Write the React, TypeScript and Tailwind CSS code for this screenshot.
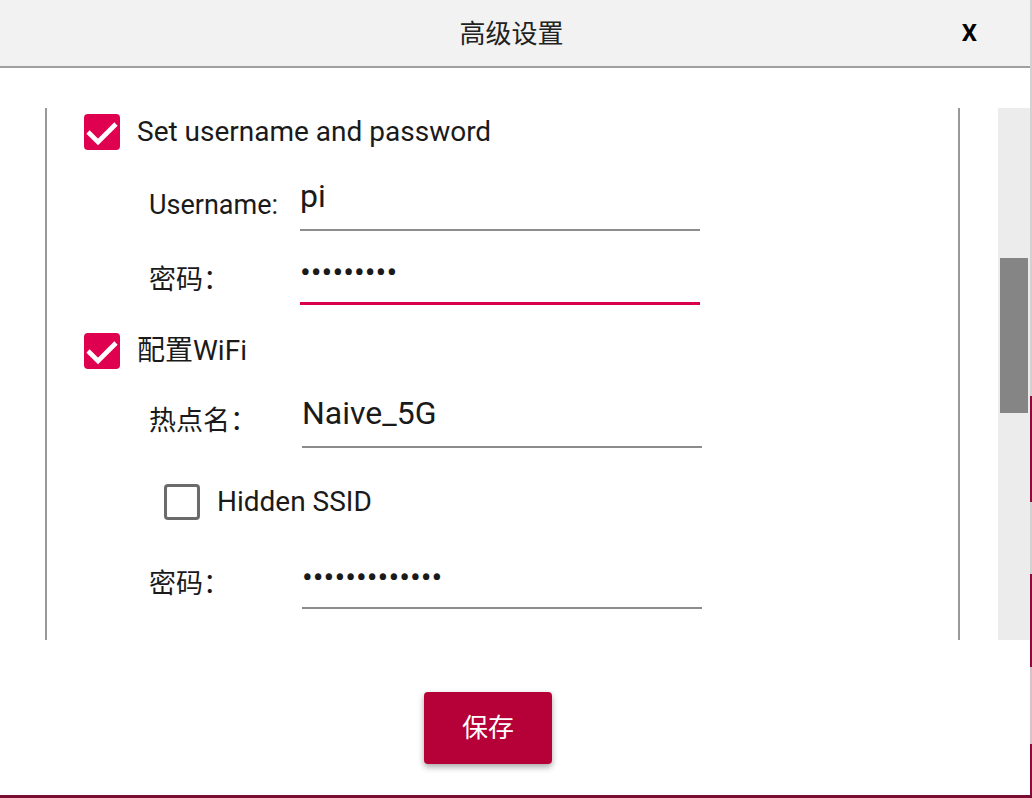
import React from "react"

const FONT = "font-['Roboto','Noto_Sans_CJK_SC',sans-serif]"

function CheckedBox() {
    return (
        <div className="w-[36px] h-[36px] rounded-[4px] bg-[#df0050] flex-shrink-0">
            <svg viewBox="0 0 36 36" className="w-[36px] h-[36px]">
                <path d="M4 18 L14 28 L32 10" fill="none" stroke="white" strokeWidth="4.6" />
            </svg>
        </div>
    )
}

function EmptyBox() {
    return <div className="w-[36px] h-[36px] rounded-[4px] border-[3px] border-[#6b6b6b] flex-shrink-0" />
}

type FieldProps = {
    label: string
    value: string
    top: string
    labelW: string
    labelMb: string
    line: string
    pb: string
    dots?: boolean
}

function Field({ label, value, top, labelW, labelMb, line, pb, dots }: FieldProps) {
    return (
        <div className={`flex items-end pl-[65px] ${top}`}>
            <div className={`${labelW} ${labelMb} text-[27px] leading-[36px] text-[#1a1a1a]`}>{label}</div>
            <div className={`w-[400px] ${pb} ${line}`}>
                {dots ? (
                    <div className="text-[32px] leading-[40px] pt-[2px] -mb-[2px] text-[#1a1a1a]">{value}</div>
                ) : (
                    <div className="text-[32px] leading-[40px] text-[#1a1a1a]">{value}</div>
                )}
            </div>
        </div>
    )
}

export default function App() {
    return (
        <div className={`w-[1032px] h-[798px] flex flex-col overflow-hidden bg-white ${FONT}`}>
            <div className="flex h-[795px]">
                {/* Dialog */}
                <div className="w-[1030px] h-full flex flex-col bg-white">
                    {/* Header */}
                    <header className="h-[68px] flex-shrink-0 grid grid-cols-[1fr_auto_1fr] items-center bg-[#f2f2f2] border-b-2 border-[#a0a0a0]">
                        <div />
                        <h1 className="text-[26px] leading-none text-[#222] pt-[2px] mr-[7px]">高级设置</h1>
                        <div className="flex justify-end pr-[53px]">
                            <span className="text-[24px] font-bold text-black">X</span>
                        </div>
                    </header>

                    {/* Scroll area */}
                    <div className="flex h-[532px] mt-[40px] pl-[45px]">
                        <div className="w-[915px] h-full border-x-2 border-[#999] pl-[37px]">
                            <div className="flex items-center gap-[17px] mt-[6px] h-[36px]">
                                <CheckedBox />
                                <span className="text-[28px] leading-[36px] text-[#1a1a1a]">Set username and password</span>
                            </div>

                            <Field
                                label="Username:"
                                value="pi"
                                top="mt-[26px]"
                                labelW="w-[151px]"
                                labelMb="mb-[8px]"
                                line="border-b-2 border-[#8c8c8c]"
                                pb="pb-[13px]"
                            />
                            <Field
                                label="密码："
                                value="•••••••••"
                                top="mt-[19px]"
                                labelW="w-[151px]"
                                labelMb="mb-[7px]"
                                line="border-b-[3px] border-[#d8004c]"
                                pb="pb-[12px]"
                                dots
                            />

                            <div className="flex items-center gap-[17px] mt-[28px] h-[36px]">
                                <CheckedBox />
                                <span className="text-[28px] leading-[36px] text-[#1a1a1a]">配置WiFi</span>
                            </div>

                            <Field
                                label="热点名："
                                value="Naive_5G"
                                top="mt-[24px]"
                                labelW="w-[153px]"
                                labelMb="mb-[9px]"
                                line="border-b-2 border-[#8c8c8c]"
                                pb="pb-[13px]"
                            />

                            <div className="flex items-center gap-[17px] mt-[36px] h-[36px] pl-[80px]">
                                <EmptyBox />
                                <span className="text-[28px] leading-[36px] text-[#1a1a1a]">Hidden SSID</span>
                            </div>

                            <Field
                                label="密码："
                                value="•••••••••••••"
                                top="mt-[35px]"
                                labelW="w-[153px]"
                                labelMb="mb-[7px]"
                                line="border-b-2 border-[#8c8c8c]"
                                pb="pb-[12px]"
                                dots
                            />
                        </div>

                        {/* Scrollbar */}
                        <div className="w-[32px] h-full ml-[38px] bg-[#ececec] pt-[150px] px-[2px]">
                            <div className="h-[155px] bg-[#858585]" />
                        </div>
                    </div>

                    {/* Footer */}
                    <div className="flex mt-[52px] pl-[424px]">
                        <button className="w-[128px] h-[72px] rounded-[4px] bg-[#b50038] text-white text-[26px] shadow-[0_3px_6px_rgba(0,0,0,0.35)]">
                            保存
                        </button>
                    </div>
                </div>

                {/* Window behind, right edge */}
                <div className="w-[2px] h-full flex flex-col">
                    <div className="h-[396px] bg-[#d1d1d1]" />
                    <div className="h-[106px] bg-[#8d0a3a]" />
                    <div className="h-[72px] bg-[#d1d1d1]" />
                    <div className="h-[93px] bg-[#8d0a3a]" />
                    <div className="h-[77px] bg-[#d8c0c8]" />
                    <div className="flex-1 bg-[#8d0a3a]" />
                </div>
            </div>
            <div className="h-[3px] bg-[#780c31]" />
        </div>
    )
}
